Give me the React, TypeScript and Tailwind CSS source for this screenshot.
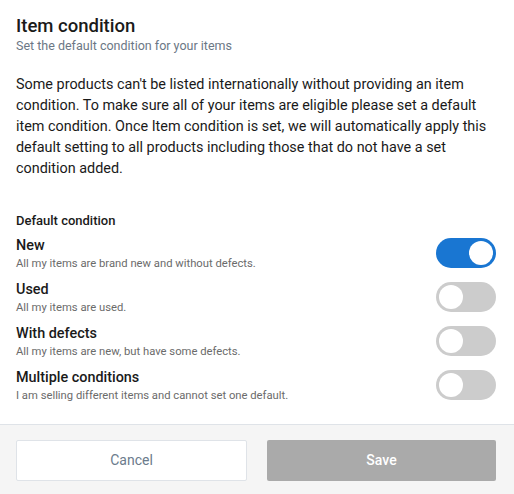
import { useState } from 'react'

const OPTIONS = [
  { key: 'new', label: 'New', desc: 'All my items are brand new and without defects.' },
  { key: 'used', label: 'Used', desc: 'All my items are used.' },
  { key: 'defects', label: 'With defects', desc: 'All my items are new, but have some defects.' },
  { key: 'multiple', label: 'Multiple conditions', desc: 'I am selling different items and cannot set one default.' },
]

function Toggle({ on, onClick }: { on: boolean; onClick: () => void }) {
  return (
    <button
      type="button"
      onClick={onClick}
      className={`flex h-[30px] w-[60px] shrink-0 items-center rounded-full p-[3px] ${
        on ? 'justify-end bg-[#1976d2]' : 'justify-start bg-[#cccccc]'
      }`}
    >
      <span className="h-6 w-6 rounded-full bg-white" />
    </button>
  )
}

export default function App() {
  const [selected, setSelected] = useState('new')

  return (
    <div className="flex h-[494px] w-[514px] flex-col bg-white font-['Roboto',sans-serif] text-[#1a1a1a]">
      <div className="flex-1 pl-4 pr-[18px]">
        {/* Header */}
        <div className="pt-[14px]">
          <h2 className="text-[18.5px] font-medium leading-6">Item condition</h2>
          <p className="text-[12.5px] leading-4 text-[#6b7785]">Set the default condition for your items</p>
        </div>

        <p className="mt-5 text-[14.4px] leading-[21px]">
          Some products can't be listed internationally without providing an item condition. To make sure all of
          your items are eligible please set a default item condition. Once Item condition is set, we will
          automatically apply this default setting to all products including those that do not have a set
          condition added.
        </p>

        <h3 className="mt-[34px] text-[13px] font-medium leading-4">Default condition</h3>

        <div className="mt-[4px] flex flex-col gap-[4px]">
          {OPTIONS.map(opt => (
            <div key={opt.key} className="flex h-10 items-center justify-between">
              <div>
                <div className="text-[14.4px] font-medium leading-5">{opt.label}</div>
                <div className="mt-px text-[11.25px] leading-[14px] text-[#6b6b6b]">{opt.desc}</div>
              </div>
              <Toggle on={selected === opt.key} onClick={() => setSelected(opt.key)} />
            </div>
          ))}
        </div>
      </div>

      {/* Footer */}
      <div className="flex h-[70px] gap-5 border-t border-[#dfe3e8] bg-[#f5f5f5] pl-4 pr-[18px] pt-[15px]">
        <button
          type="button"
          className="h-[41px] flex-1 rounded-[2px] border border-[#dfe3e8] bg-white text-[14px] text-[#6b7b8c]"
        >
          Cancel
        </button>
        <button
          type="button"
          className="h-[41px] flex-1 rounded-[2px] bg-[#aaaaaa] text-[14px] font-medium text-white"
        >
          Save
        </button>
      </div>
    </div>
  )
}
